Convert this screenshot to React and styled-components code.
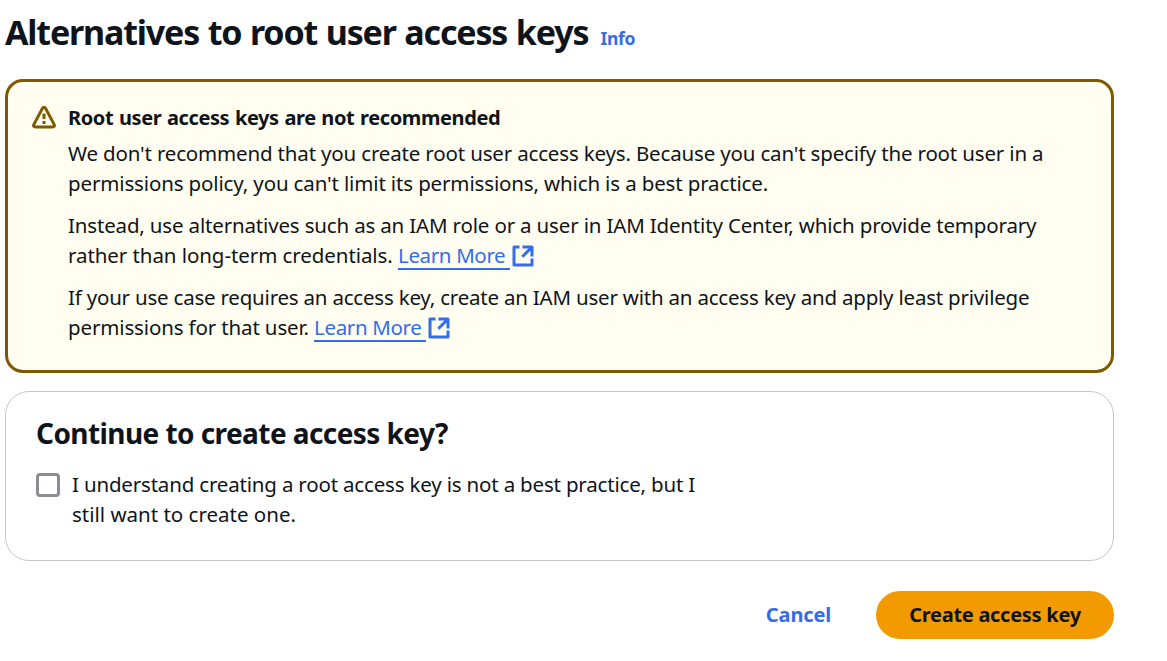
import React, { useState } from "react";
import styled, { createGlobalStyle } from "styled-components";

const color = {
  text: "#0f141a",
  link: "#346de6",
  warning: "#7f5900",
  warningFill: "#fffef0",
  border: "#c6c6cd",
  control: "#8c8c94",
  primary: "#f39a00",
};

const GlobalStyle = createGlobalStyle`
  *, *::before, *::after { box-sizing: border-box; }
  body {
    margin: 0;
    background: #fff;
    color: ${color.text};
    font-family: "Noto Sans", "Open Sans", sans-serif;
    font-size: 20.5px;
    line-height: 30px;
  }
`;

const Page = styled.main`
  width: 1109px;
  margin-left: 5px;
`;

const Header = styled.header`
  display: flex;
  align-items: baseline;
  gap: 12px;
  height: 79px;
  padding-top: 9px;
`;

const Title = styled.h1`
  margin: 0;
  font-size: 34px;
  line-height: 46px;
  font-weight: 700;
  white-space: nowrap;
  letter-spacing: -1.16px;
  word-spacing: 0.9px;
`;

const InfoLink = styled.a`
  color: ${color.link};
  font-size: 17.5px;
  font-weight: 700;
  letter-spacing: -0.3px;
`;

const Alert = styled.section`
  display: flex;
  gap: 12px;
  height: 294px;
  padding: 20px 24px;
  border: 3px solid ${color.warning};
  border-radius: 18px;
  background: ${color.warningFill};
`;

const WarningIcon = styled.svg`
  flex: none;
  width: 24px;
  height: 24px;
  margin-top: 3px;
`;

const AlertTitle = styled.h2`
  margin: 0 0 5px;
  padding-top: 1px;
  font-size: 20px;
  line-height: 30px;
  font-weight: 700;
  word-spacing: 0.8px;
`;

const Paragraph = styled.p`
  margin: 0 0 12px;
`;

const Line = styled.span`
  display: block;
  white-space: nowrap;
  letter-spacing: ${(p) => p.$track || 0}px;
`;

const LearnMore = styled.a`
  display: inline-flex;
  align-items: center;
  height: 30px;
  vertical-align: top;
  color: ${color.link};
  letter-spacing: -0.36px;
`;

const LinkText = styled.span`
  height: 29px;
  margin-right: 1.5px;
  border-bottom: 2px solid ${color.link};
  line-height: 29px;
  white-space: pre;
`;

const LinkIcon = styled.svg`
  flex: none;
  width: 22px;
  height: 22px;
  margin-top: 2px;
`;

const Card = styled.section`
  height: 170px;
  margin-top: 18px;
  padding: 23px 30px;
  border: 1px solid ${color.border};
  border-radius: 24px;
`;

const CardTitle = styled.h2`
  margin: 0 0 18px;
  font-size: 28px;
  line-height: 36px;
  font-weight: 700;
  letter-spacing: -0.57px;
`;

const CheckRow = styled.label`
  display: flex;
  gap: 12px;
`;

const Checkbox = styled.input`
  appearance: none;
  flex: none;
  width: 24px;
  height: 24px;
  margin: 4px 0 0;
  border: 3px solid ${color.control};
  border-radius: 4px;
  background: #fff;
  &:checked { background: ${color.link}; }
`;

const Actions = styled.footer`
  display: flex;
  justify-content: flex-end;
  gap: 12px;
  margin-top: 30px;
`;

const Button = styled.button`
  width: ${(p) => (p.$primary ? 238 : 131)}px;
  height: 48px;
  padding: 0;
  border: 0;
  border-radius: 24px;
  background: ${(p) => (p.$primary ? color.primary : "transparent")};
  color: ${(p) => (p.$primary ? color.text : color.link)};
  font: 700 20px/30px "Noto Sans", "Open Sans", sans-serif;
  letter-spacing: ${(p) => p.$track || 0}px;
  white-space: nowrap;
`;

const ExternalIcon = () => (
  <LinkIcon viewBox="0 0 22 22" fill="none" stroke={color.link} strokeWidth="3" strokeLinejoin="round">
    <path d="M7.5 2H2v18h18v-6.5M10.5 2H20v9.5M20 2L10.3 11.7" />
  </LinkIcon>
);

function ExternalLink() {
  return (
    <LearnMore>
      <LinkText>Learn More </LinkText>
      <ExternalIcon />
    </LearnMore>
  );
}

export default function App() {
  const [checked, setChecked] = useState(false);
  return (
    <Page>
      <GlobalStyle />
      <Header>
        <Title>Alternatives to root user access keys</Title>
        <InfoLink>Info</InfoLink>
      </Header>
      <Alert>
        <WarningIcon viewBox="0 0 24 24" fill="none" stroke={color.warning} strokeWidth="3">
          <path d="M10.4 3.4L1.9 19.4Q0.8 21.9 3.4 21.9H20.6Q23.2 21.9 22.1 19.4L13.6 3.4Q12 1.2 10.4 3.4z" strokeLinejoin="round" />
          <path d="M12 8.5v5.5M12 16v3" />
        </WarningIcon>
        <div>
          <AlertTitle><Line $track={-0.38}>Root user access keys are not recommended</Line></AlertTitle>
          <Paragraph>
            <Line $track={-0.165}>We don't recommend that you create root user access keys. Because you can't specify the root user in a</Line>
            <Line $track={-0.14}>permissions policy, you can't limit its permissions, which is a best practice.</Line>
          </Paragraph>
          <Paragraph>
            <Line $track={-0.165}>Instead, use alternatives such as an IAM role or a user in IAM Identity Center, which provide temporary</Line>
            <Line $track={-0.07}>rather than long-term credentials. <ExternalLink /></Line>
          </Paragraph>
          <Paragraph>
            <Line $track={-0.21}>If your use case requires an access key, create an IAM user with an access key and apply least privilege</Line>
            <Line $track={-0.14}>permissions for that user. <ExternalLink /></Line>
          </Paragraph>
        </div>
      </Alert>
      <Card>
        <CardTitle>Continue to create access key?</CardTitle>
        <CheckRow>
          <Checkbox type="checkbox" checked={checked} onChange={() => setChecked(!checked)} />
          <span>
            <Line $track={-0.18}>I understand creating a root access key is not a best practice, but I</Line>
            <Line>still want to create one.</Line>
          </span>
        </CheckRow>
      </Card>
      <Actions>
        <Button $track={-0.1}>Cancel</Button>
        <Button $primary $track={-0.28}>Create access key</Button>
      </Actions>
    </Page>
  );
}
